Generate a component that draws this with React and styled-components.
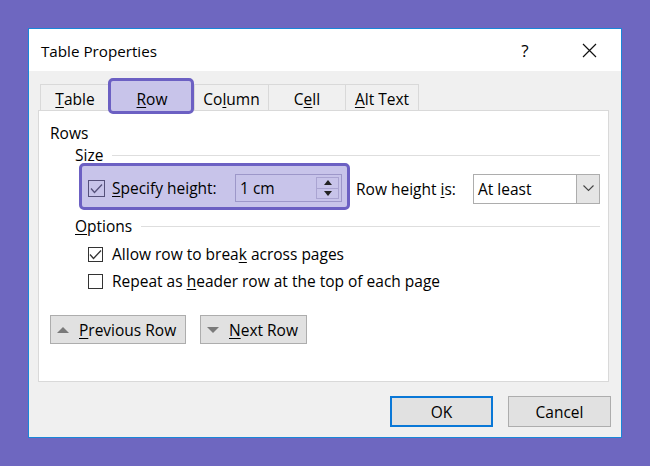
import React from "react";
import styled, { createGlobalStyle } from "styled-components";

const FS = "15.5px";

const Global = createGlobalStyle`
  html, body { margin: 0; padding: 0; }
  body {
    width: 650px; height: 466px; overflow: hidden;
    background: #6e67c0;
    font-family: "Open Sans", "Noto Sans", sans-serif;
    color: #000;
  }
`;

const Page = styled.div`
  padding: 28px 0 0 28px;
`;

const Dialog = styled.div`
  box-sizing: border-box;
  width: 594px;
  height: 410px;
  border: 1px solid #1a86d8;
  background: #f0f0f0;
  display: flex;
  flex-direction: column;
`;

const TitleBar = styled.div`
  height: 42px;
  background: #fff;
  display: flex;
  align-items: center;
  padding-left: 12px;
  flex: 0 0 auto;
`;

const Title = styled.div`
  font-size: 15.2px;
  flex: 1;
  margin-top: 1px;
`;

const TitleButton = styled.div`
  width: 64px;
  height: 42px;
  display: flex;
  align-items: center;
  justify-content: center;
  font-size: 17px;
`;

const Body = styled.div`
  flex: 1;
  display: flex;
  flex-direction: column;
  padding: 13px 12px 0 9px;
`;

const TabStrip = styled.div`
  display: flex;
  margin-left: 2px;
  height: 26px;
  position: relative;
  z-index: 2;
`;

const Tab = styled.div`
  box-sizing: border-box;
  width: ${(p) => p.$w}px;
  height: 26px;
  border-top: 1px solid #d9d9d9;
  border-left: 1px solid #d9d9d9;
  ${(p) => (p.$last ? "border-right: 1px solid #d9d9d9;" : "")}
  display: flex;
  align-items: center;
  justify-content: center;
  font-size: ${FS};
  position: relative;
  padding-top: 2px;
`;

const TabLabel = styled.span`
  position: relative;
  z-index: 1;
`;

const TabHighlight = styled.div`
  position: absolute;
  left: -2px;
  right: 0;
  top: -7px;
  bottom: -4px;
  border: 3px solid #6c60c3;
  border-radius: 5px;
  background: #c8c4ea;
`;

const Panel = styled.div`
  box-sizing: border-box;
  width: 571px;
  height: 272px;
  background: #fff;
  border: 1px solid #d9d9d9;
  padding: 12px 8px 0 11px;
  display: flex;
  flex-direction: column;
`;

const Heading = styled.div`
  font-size: ${FS};
  line-height: 20px;
`;

const GroupHeader = styled.div`
  display: flex;
  align-items: center;
  font-size: ${FS};
  line-height: 20px;
  margin-left: 25px;
  margin-top: ${(p) => p.$mt || 0}px;
`;

const Rule = styled.div`
  flex: 1;
  height: 1px;
  background: #dedede;
  margin-left: 9px;
  margin-top: 1px;
`;

const SizeRow = styled.div`
  display: flex;
  align-items: center;
  margin-left: 29px;
  margin-top: -2px;
`;

const Highlight = styled.div`
  box-sizing: border-box;
  width: 271px;
  height: 47px;
  border: 3px solid #6c60c3;
  border-radius: 5px;
  background: #c8c4ea;
  display: flex;
  align-items: center;
  padding: 3px 5px 0 6px;
`;

const Box = styled.div`
  box-sizing: border-box;
  width: ${(p) => p.$s}px;
  height: ${(p) => p.$s}px;
  border: 1px solid ${(p) => p.$c || "#333"};
  background: ${(p) => p.$bg || "#fff"};
  display: flex;
  align-items: center;
  justify-content: center;
  flex: 0 0 auto;
`;

const Label = styled.span`
  font-size: ${FS};
  margin-left: ${(p) => p.$ml || 0}px;
  white-space: nowrap;
`;

const U = styled.u`
  text-underline-offset: 2px;
  text-decoration-thickness: 1px;
`;

const SpinBox = styled.div`
  box-sizing: border-box;
  width: 107px;
  height: 28px;
  margin-left: auto;
  border: 1px solid #9d97c9;
  display: flex;
  align-items: center;
  padding-left: 4px;
  font-size: ${FS};
`;

const SpinValue = styled.span`
  flex: 1;
`;

const SpinButtons = styled.div`
  box-sizing: border-box;
  width: 23px;
  height: 22px;
  margin-right: 2px;
  border: 1px solid #aaa4d2;
  display: flex;
  flex-direction: column;
`;

const SpinHalf = styled.div`
  flex: 1;
  display: flex;
  align-items: center;
  justify-content: center;
  & + & { border-top: 1px solid #aaa4d2; }
`;

const RowHeightLabel = styled.span`
  font-size: ${FS};
  margin-left: 6px;
  margin-top: 4px;
  white-space: nowrap;
`;

const Select = styled.div`
  box-sizing: border-box;
  width: 127px;
  height: 30px;
  margin-left: auto;
  margin-top: 4px;
  border: 1px solid #adadad;
  background: #fff;
  display: flex;
  align-items: stretch;
  font-size: ${FS};
`;

const SelectValue = styled.div`
  flex: 1;
  display: flex;
  align-items: center;
  padding-left: 4px;
`;

const SelectArrow = styled.div`
  width: 22px;
  background: #e5e5e5;
  border-left: 1px solid #adadad;
  display: flex;
  align-items: center;
  justify-content: center;
`;

const CheckRow = styled.div`
  display: flex;
  align-items: center;
  height: 20px;
  margin-left: 38px;
  margin-top: ${(p) => p.$mt}px;
`;

const NavRow = styled.div`
  display: flex;
  gap: 14px;
  margin-top: 24px;
`;

const Button = styled.div`
  box-sizing: border-box;
  width: ${(p) => p.$w}px;
  height: ${(p) => p.$h || 29}px;
  background: #e1e1e1;
  border: ${(p) => (p.$primary ? "2px solid #0a78d7" : "1px solid #adadad")};
  display: flex;
  align-items: center;
  justify-content: ${(p) => (p.$center ? "center" : "flex-start")};
  padding-left: ${(p) => (p.$center ? 0 : 6)}px;
  font-size: ${FS};
`;

const Footer = styled.div`
  display: flex;
  justify-content: flex-end;
  gap: 15px;
  margin-top: 14px;
  margin-right: -2px;
`;

const Check = ({ c = "#333" }) => (
  <svg width="13" height="11" viewBox="0 0 13 11">
    <polyline points="1,5.5 4.5,9.5 12,1.5" fill="none" stroke={c} strokeWidth="1.3" />
  </svg>
);

const Tri = ({ up, w = 12, h = 6, c = "#7a7a7a" }) => (
  <svg width={w} height={h} viewBox={`0 0 ${w} ${h}`}>
    <polygon points={up ? `0,${h} ${w / 2},0 ${w},${h}` : `0,0 ${w / 2},${h} ${w},0`} fill={c} />
  </svg>
);

export default function App() {
  return (
    <>
      <Global />
      <Page>
        <Dialog>
          <TitleBar>
            <Title>Table Properties</Title>
            <TitleButton>?</TitleButton>
            <TitleButton>
              <svg width="15" height="15" viewBox="0 0 15 15">
                <path d="M1 1 L14 14 M14 1 L1 14" stroke="#111" strokeWidth="1.2" />
              </svg>
            </TitleButton>
          </TitleBar>
          <Body>
            <TabStrip>
              <Tab $w={69}><TabLabel><U>T</U>able</TabLabel></Tab>
              <Tab $w={85}>
                <TabHighlight />
                <TabLabel><U>R</U>ow</TabLabel>
              </Tab>
              <Tab $w={74}><TabLabel>Co<U>l</U>umn</TabLabel></Tab>
              <Tab $w={77}><TabLabel>C<U>e</U>ll</TabLabel></Tab>
              <Tab $w={74} $last><TabLabel><U>A</U>lt Text</TabLabel></Tab>
            </TabStrip>
            <Panel>
              <Heading>Rows</Heading>
              <GroupHeader $mt={2}>Size<Rule /></GroupHeader>
              <SizeRow>
                <Highlight>
                  <Box $s={17} $c="#55507a" $bg="transparent"><Check c="#55507a" /></Box>
                  <Label $ml={7}><U>S</U>pecify height:</Label>
                  <SpinBox>
                    <SpinValue>1 cm</SpinValue>
                    <SpinButtons>
                      <SpinHalf><Tri up w={8} h={5} c="#222" /></SpinHalf>
                      <SpinHalf><Tri w={8} h={5} c="#222" /></SpinHalf>
                    </SpinButtons>
                  </SpinBox>
                </Highlight>
                <RowHeightLabel>Row height <U>i</U>s:</RowHeightLabel>
                <Select>
                  <SelectValue>At least</SelectValue>
                  <SelectArrow>
                    <svg width="11" height="7" viewBox="0 0 11 7">
                      <polyline points="0.5,0.5 5.5,5.5 10.5,0.5" fill="none" stroke="#444" strokeWidth="1.1" />
                    </svg>
                  </SelectArrow>
                </Select>
              </SizeRow>
              <GroupHeader $mt={6}><U>O</U>ptions<Rule /></GroupHeader>
              <CheckRow $mt={8}>
                <Box $s={15}><Check /></Box>
                <Label $ml={9}>Allow row to brea<U>k</U> across pages</Label>
              </CheckRow>
              <CheckRow $mt={7}>
                <Box $s={15} />
                <Label $ml={9}>Repeat as <U>h</U>eader row at the top of each page</Label>
              </CheckRow>
              <NavRow>
                <Button $w={136}>
                  <Tri up />
                  <Label $ml={10}><U>P</U>revious Row</Label>
                </Button>
                <Button $w={107}>
                  <Tri />
                  <Label $ml={10}><U>N</U>ext Row</Label>
                </Button>
              </NavRow>
            </Panel>
            <Footer>
              <Button $w={103} $h={31} $center $primary>OK</Button>
              <Button $w={103} $h={31} $center>Cancel</Button>
            </Footer>
          </Body>
        </Dialog>
      </Page>
    </>
  );
}
